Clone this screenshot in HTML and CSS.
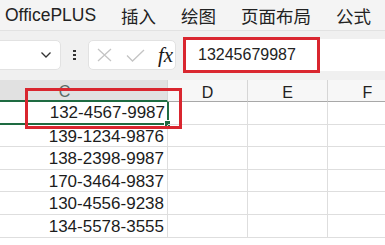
FILE: index.html
```html
<!DOCTYPE html>
<html lang="zh-CN">
<head>
  <meta charset="UTF-8">
  <title>OfficePLUS</title>
  <link rel="stylesheet" href="styles.css">
</head>
<body>
  <div class="menu">
    <span>OfficePLUS</span>
    <span>插入</span>
    <span>绘图</span>
    <span>页面布局</span>
    <span>公式</span>
  </div>

  <div class="fbar">
    <div class="namebox">
      <svg class="chev" width="12" height="8" viewBox="0 0 12 8">
        <path d="M1.5 1.5 L6 6 L10.5 1.5" fill="none" stroke="#333" stroke-width="1.3"/>
      </svg>
    </div>
    <div class="dots"><i></i><i></i><i></i></div>
    <div class="fxbox">
      <svg width="16" height="14" viewBox="0 0 16 14">
        <path d="M1 1 L14 13 M14 1 L1 13" stroke="#c4c4c4" stroke-width="1.3"/>
      </svg>
      <svg width="19" height="13" viewBox="0 0 19 13">
        <path d="M1 6.5 L6.5 12 L18 1" fill="none" stroke="#c4c4c4" stroke-width="1.3"/>
      </svg>
      <span class="fx">fx</span>
    </div>
    <div class="input">13245679987</div>
  </div>

  <div class="sheet">
    <div class="head sel">C</div>
    <div class="head">D</div>
    <div class="head">E</div>
    <div class="head">F</div>

    <div class="cell num active">132-4567-9987<b class="handle"></b></div>
    <div class="cell"></div><div class="cell"></div><div class="cell"></div>
    <div class="cell num">139-1234-9876</div>
    <div class="cell"></div><div class="cell"></div><div class="cell"></div>
    <div class="cell num">138-2398-9987</div>
    <div class="cell"></div><div class="cell"></div><div class="cell"></div>
    <div class="cell num">170-3464-9837</div>
    <div class="cell"></div><div class="cell"></div><div class="cell"></div>
    <div class="cell num">130-4556-9238</div>
    <div class="cell"></div><div class="cell"></div><div class="cell"></div>
    <div class="cell num">134-5578-3555</div>
    <div class="cell"></div><div class="cell"></div><div class="cell"></div>
  </div>

  <!-- annotation boxes -->
  <div class="mark mark-formula"></div>
  <div class="mark mark-cell"></div>
</body>
</html>
```

FILE: styles.css
```css
body {
  margin: 0;
  width: 385px;
  height: 245px;
  overflow: hidden;
  position: relative;
  background: #fff;
  font-family: "Liberation Sans", "Noto Sans CJK SC", sans-serif;
  color: #222;
}

.menu {
  height: 30px;
  display: flex;
  align-items: center;
  gap: 25px;
  padding-left: 5px;
  background: #f4f4f4;
  border-bottom: 1px solid #e2e2e2;
  font-size: 17.5px;
}

.fbar {
  height: 40px;
  padding-top: 9px;
  display: flex;
  align-items: flex-start;
  background: #f0f0f0;
  overflow: hidden;
}

.namebox {
  margin-left: -6px;
  width: 67px;
  flex: none;
  height: 30px;
  background: #fff;
  border: 1px solid #e2e2e2;
  border-radius: 5px;
  display: flex;
  align-items: center;
  justify-content: flex-end;
  padding-right: 8px;
  box-sizing: border-box;
}

.dots {
  width: 27px;
  height: 30px;
  display: flex;
  flex-direction: column;
  align-items: center;
  justify-content: center;
  gap: 1.5px;
}

.dots i {
  width: 2.5px;
  height: 2.5px;
  background: #333;
}

.fxbox {
  width: 88px;
  height: 30px;
  background: #fff;
  border: 1px solid #e2e2e2;
  border-radius: 5px;
  box-sizing: border-box;
  display: flex;
  align-items: center;
  padding-left: 8px;
  gap: 13px;
}

.fx {
  font-family: "Liberation Serif", serif;
  font-style: italic;
  font-size: 21px;
  margin-left: 0;
  color: #1a1a1a;
}

.input {
  margin-left: 7px;
  margin-top: -1px;
  flex: 1;
  height: 32px;
  background: #fff;
  font-size: 16px;
  line-height: 32px;
  padding-left: 15px;
}

.sheet {
  display: grid;
  grid-template-columns: 206px 80px 80px 80px;
  grid-template-rows: 22px repeat(6, 22.6px);
  margin-left: -38px;
  width: 423px;
  overflow: hidden;
}

.head {
  background: #f7f7f7;
  border-right: 1px solid #d6d6d6;
  border-bottom: 1px solid #a8a8a8;
  text-align: center;
  font-size: 16px;
  line-height: 26px;
  color: #222;
}

.head.sel {
  background: #e1e1e1;
  color: #5a6a66;
  border-bottom: 2px solid #1e6b41;
  line-height: 24px;
}

.cell {
  border-right: 1px solid #dedede;
  border-bottom: 1px solid #dedede;
  position: relative;
}

.num {
  text-align: right;
  font-size: 17px;
  line-height: 23px;
  padding-right: 3px;
  color: #1c1c1c;
}

.cell.active {
  border: 2px solid #1e6b41;
  border-top: none;
  margin-right: -1px;
  line-height: 22px;
  padding-right: 2px;
}

.handle {
  position: absolute;
  right: -4px;
  bottom: -4px;
  width: 5px;
  height: 5px;
  background: #1e6b41;
  border: 1px solid #fff;
}

.mark {
  position: absolute;
  border: 3px solid #d9262f;
  box-sizing: border-box;
}

.mark-formula {
  left: 183px;
  top: 37px;
  width: 137px;
  height: 36px;
}

.mark-cell {
  left: 25px;
  top: 88px;
  width: 157px;
  height: 41px;
}
```
